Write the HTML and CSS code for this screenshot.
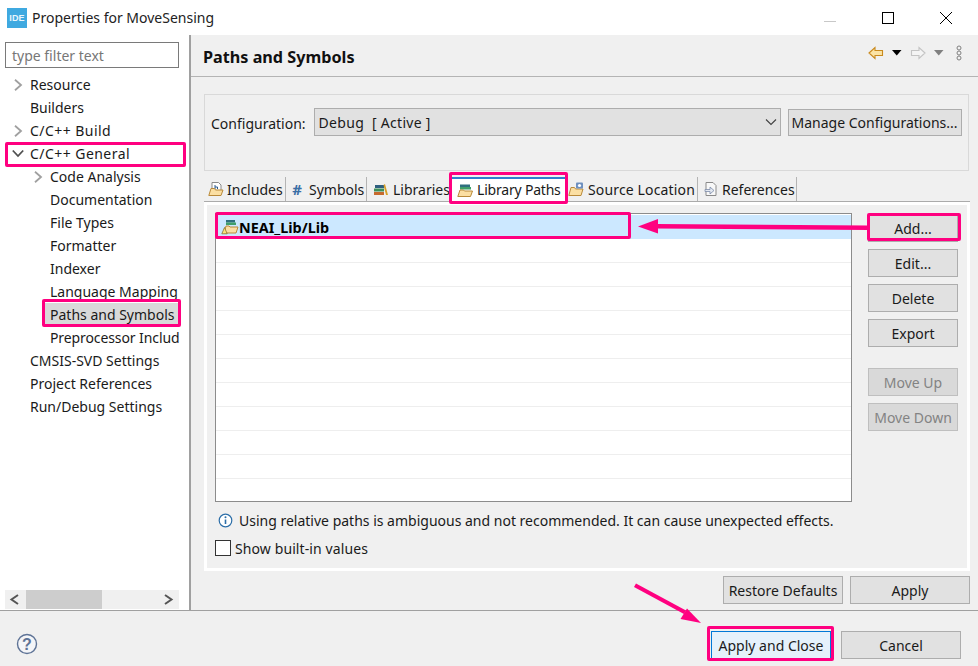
FILE: index.html
```html
<!DOCTYPE html>
<html lang="en">
<head>
<meta charset="utf-8">
<title>Properties for MoveSensing</title>
<link rel="stylesheet" href="styles.css">
</head>
<body>
<div class="window">
  <header class="titlebar">
    <span class="ide-logo">IDE</span>
    <span class="title">Properties for MoveSensing</span>
    <div class="win-controls">
      <svg width="58" height="24" viewBox="0 0 58 24"><path d="M23 15.500h12" stroke="#c8c8c8"/></svg>
      <svg width="58" height="24" viewBox="0 0 58 24"><rect x="23.500" y="6.500" width="11" height="11" fill="none" stroke="#000"/></svg>
      <svg width="58" height="24" viewBox="0 0 58 24"><path d="M23 6l12 12M35 6L23 18" stroke="#000" fill="none"/></svg>
    </div>
  </header>
  <div class="main">
    <aside class="sidebar">
      <div class="filter">type filter text</div>
      <ul class="tree">
        <li class="row"><svg class="chev" viewBox="0 0 10 12"><path d="M2 .8l6 5.200-6 5.200" fill="none" stroke="#a0a0a0" stroke-width="1.800"/></svg>Resource</li>
        <li class="row"><span class="chev"></span>Builders</li>
        <li class="row cpp"><svg class="chev" viewBox="0 0 10 12"><path d="M2 .8l6 5.200-6 5.200" fill="none" stroke="#a0a0a0" stroke-width="1.800"/></svg>C/C++ Build</li>
        <li class="row cpp"><svg class="chev-open" viewBox="0 0 12 10"><path d="M.8 1.500l5.200 5.500 5.200-5.500" fill="none" stroke="#505050" stroke-width="1.800"/></svg>C/C++ General</li>
        <li class="row sub"><svg class="chev" viewBox="0 0 10 12"><path d="M2 .8l6 5.200-6 5.200" fill="none" stroke="#a0a0a0" stroke-width="1.800"/></svg>Code Analysis</li>
        <li class="row sub"><span class="chev"></span>Documentation</li>
        <li class="row sub"><span class="chev"></span>File Types</li>
        <li class="row sub"><span class="chev"></span>Formatter</li>
        <li class="row sub"><span class="chev"></span>Indexer</li>
        <li class="row sub"><span class="chev"></span>Language Mapping</li>
        <li class="row selected">Paths and Symbols</li>
        <li class="row sub tight"><span class="chev"></span>Preprocessor Includ</li>
        <li class="row"><span class="chev"></span>CMSIS-SVD Settings</li>
        <li class="row"><span class="chev"></span>Project References</li>
        <li class="row"><span class="chev"></span>Run/Debug Settings</li>
      </ul>
      <div class="hscroll">
        <svg width="21" height="19" viewBox="0 0 21 19"><path d="M13 5L6.500 9.500 13 14" fill="none" stroke="#555" stroke-width="2"/></svg>
        <span class="thumb"></span>
        <svg class="right-arrow" width="21" height="19" viewBox="0 0 21 19"><path d="M7 5l6.500 4.500L7 14" fill="none" stroke="#555" stroke-width="2"/></svg>
      </div>
    </aside>
    <section class="content">
      <div class="page-head">
        <h1>Paths and Symbols</h1>
        <div class="nav-icons">
          <svg width="16" height="14" viewBox="0 0 16 14"><path d="M1 7l6-5.500V4.500h7.500v5H7v3z" fill="#fbe3a4" stroke="#c98a1e" stroke-width="1.100"/></svg>
          <svg class="g1" width="10" height="6" viewBox="0 0 10 6"><path d="M0 0h9.500L4.750 5.500z" fill="#000"/></svg>
          <svg class="g2" width="16" height="14" viewBox="0 0 16 14"><path d="M15 7L9 1.500V4.500H1.500v5H9v3z" fill="#f4f4f4" stroke="#c4c4c4" stroke-width="1.100"/></svg>
          <svg class="g3" width="10" height="6" viewBox="0 0 10 6"><path d="M0 0h9.500L4.750 5.500z" fill="#808080"/></svg>
          <svg class="g4" width="6" height="16" viewBox="0 0 6 16"><g fill="none" stroke="#808080"><circle cx="3" cy="3" r="2"/><circle cx="3" cy="8" r="2"/><circle cx="3" cy="13" r="2"/></g></svg>
        </div>
      </div>
      <div class="config">
        <label class="config-label">Configuration:</label>
        <div class="select"><span class="select-text">Debug&nbsp; [ Active ]</span>
          <svg width="12" height="8" viewBox="0 0 12 8"><path d="M1 1.500l5 5 5-5" fill="none" stroke="#404040" stroke-width="1.100"/></svg>
        </div>
        <button class="btn manage">Manage Configurations...</button>
      </div>
      <nav class="tabs">
        <div class="tab t1">
          <svg width="16" height="16" viewBox="0 0 16 16"><path d="M4 7V1.500h6.500L13 4v5" fill="#fff" stroke="#8a8a8a"/><path d="M7 4v4M7 6h2.500v2" fill="none" stroke="#2c5a8c"/><path d="M.8 14.500L3 7.500h3.500l1 1.500h7.500l-2 5.500z" fill="#fbdfa3" stroke="#b98a3a"/></svg>Includes</div>
        <div class="tab t2"><span class="hash">#</span>Symbols</div>
        <div class="tab t3">
          <svg width="16" height="16" viewBox="0 0 16 16"><rect x="1" y="11" width="10" height="3" fill="#c66a2e"/><rect x="1" y="7.500" width="10" height="3" fill="#3f8f5a"/><rect x="2" y="4" width="9" height="3" fill="#2f5f7f"/><path d="M12 3l3 11h-2l-2.500-10z" fill="#d7a02a"/></svg>Libraries</div>
        <div class="tab active t4">
          <svg width="17" height="16" viewBox="0 0 17 16"><rect x="3" y="2.500" width="10" height="2.500" fill="#2f6f7f"/><rect x="3" y="5" width="11" height="2.500" fill="#3f9f6a"/><path d="M.8 14.500L3 8h3.500l1 1h8l-2 5.500z" fill="#fbdfa3" stroke="#b98a3a"/></svg>Library Paths</div>
        <div class="tab t5">
          <svg width="17" height="16" viewBox="0 0 17 16"><path d="M.8 14.500L3 6.500h3.500l1 1.500h7.500l-2 6.500z" fill="#fbdfa3" stroke="#b98a3a"/><rect x="8" y="1.500" width="7" height="6" rx="1" fill="#6d8fbf"/><circle cx="11.500" cy="4.500" r="1.600" fill="#fff"/></svg>Source Location</div>
        <div class="tab t6">
          <svg width="14" height="16" viewBox="0 0 14 16"><path d="M2 1.500h7l3 3v10H2z" fill="#f8f8f8" stroke="#8a8a8a"/><path d="M1 8.500h5V6l4 3.500L6 13v-2.500H1z" fill="#e3e8f0" stroke="#7c8ca8" stroke-width=".8"/></svg>References</div>
      </nav>
      <div class="panel">
        <div class="panel-top">
          <div class="table">
            <div class="tr first">
              <svg width="18" height="16" viewBox="0 0 18 16"><rect x="5" y="1" width="9" height="2.500" fill="#2f6f7f"/><rect x="5" y="3.500" width="10" height="2.500" fill="#3f9f6a"/><path d="M3 14l2-7h3l1 1h8l-2 6z" fill="#fbdfa3" stroke="#b98a3a"/><path d="M3.500 8.500L.8 14.800h5.400z" fill="#fce37a" stroke="#7a6420" stroke-width=".7"/></svg><b>NEAI_Lib/Lib</b>
            </div>
            <div class="tr"></div><div class="tr"></div><div class="tr"></div><div class="tr"></div><div class="tr"></div>
            <div class="tr"></div><div class="tr"></div><div class="tr"></div><div class="tr"></div><div class="tr"></div><div class="tr last"></div>
          </div>
          <div class="side-btns">
            <button class="btn add">Add...</button>
            <button class="btn">Edit...</button>
            <button class="btn">Delete</button>
            <button class="btn">Export</button>
            <button class="btn off spaced">Move Up</button>
            <button class="btn off">Move Down</button>
          </div>
        </div>
        <div class="info">
          <svg width="15" height="15" viewBox="0 0 15 15"><circle cx="7.500" cy="7.500" r="6.300" fill="#fff" stroke="#2c6ea8" stroke-width="1.200"/><path d="M7.500 6.500v4.500" stroke="#2c6ea8" stroke-width="1.600"/><circle cx="7.500" cy="4.300" r="1" fill="#2c6ea8"/></svg>
          Using relative paths is ambiguous and not recommended. It can cause unexpected effects.
        </div>
        <div class="check"><span class="box"></span>Show built-in values</div>
      </div>
      <div class="content-btns">
        <button class="btn wide">Restore Defaults</button>
        <button class="btn wide">Apply</button>
      </div>
    </section>
  </div>
  <footer class="footer">
    <svg class="help" width="22" height="22" viewBox="0 0 22 22"><circle cx="11" cy="11" r="9.500" fill="#f4f5f8" stroke="#5e7396" stroke-width="1.400"/><text x="11" y="16.800" text-anchor="middle" class="help-q">?</text></svg>
    <div class="footer-btns">
      <button class="btn wide default">Apply and Close</button>
      <button class="btn wide">Cancel</button>
    </div>
  </footer>

  <div class="mark m-general"></div>
  <div class="mark m-paths"></div>
  <div class="mark m-tab"></div>
  <div class="mark m-row"></div>
  <div class="mark m-add"></div>
  <div class="mark m-apply"></div>
  <svg class="arrows" width="978" height="666" viewBox="0 0 978 666">
    <g fill="#ff0080" stroke="none">
      <path d="M656 224L868 225.500v4.500L656 228.500z"/>
      <path d="M638 226.500l20-7.500v14.500z"/>
      <path d="M636 583.500l-2 3.500 50 27 2-3.500z"/>
      <path d="M701 623l-20.500-4 6.500-10.500z"/>
    </g>
  </svg>
</div>
</body>
</html>
```
FILE: styles.css
```css
* { box-sizing: border-box; }
html, body { margin: 0; padding: 0; }
body {
  width: 978px;
  height: 666px;
  overflow: hidden;
  background: #f0f0f0;
  font-family: "Noto Sans", "Open Sans", sans-serif;
  font-size: 14px;
  color: #1a1a1a;
}
.window { position: relative; width: 978px; height: 666px; display: flex; flex-direction: column; }

.titlebar { height: 35px; background: #fff; display: flex; align-items: center; padding-left: 7px; flex: none; }
.ide-logo {
  width: 20px; height: 20px; margin-right: 5px; background: #3fa9e0; color: #e8f6fd;
  font: bold 9px/20px "Liberation Sans", sans-serif; text-align: center; letter-spacing: .2px;
}
.title { font-size: 14px; color: #222; }
.win-controls { margin-left: auto; display: flex; align-items: center; margin-right: 3px; }

.main { flex: none; height: 575px; display: flex; }
.sidebar {
  width: 191px; flex: none; background: #fff; border-right: 2px solid #a0a0a0;
  padding: 7px 10px 1px 5px; display: flex; flex-direction: column; overflow: hidden;
}
.filter {
  height: 26px; width: 174px; border: 1px solid #7a7a7a; padding-left: 6px;
  line-height: 25px; color: #777; flex: none;
}
.tree { list-style: none; margin: 5px 0 0; padding: 0; flex: 1; width: 176px; white-space: nowrap; }
.row { height: 23px; line-height: 23px; display: flex; align-items: center; }
.row.sub { padding-left: 20px; }
.row.cpp { letter-spacing: .45px; }
.row.tight { letter-spacing: -.1px; }
.row.selected { background: #d9d9d9; margin-left: 40px; width: 134px; padding-left: 5px; }
.chev { width: 10px; height: 12px; margin: 0 7px 0 8px; flex: none; }
.chev-open { width: 12px; height: 10px; margin: 0 6px 0 7px; flex: none; }
.hscroll { height: 19px; width: 174px; background: #f0f0f0; display: flex; align-items: center; flex: none; }
.thumb { width: 76px; height: 19px; background: #cdcdcd; }
.right-arrow { margin-left: auto; }

.content { flex: 1; min-width: 0; display: flex; flex-direction: column; padding-left: 13px; }
.page-head {
  height: 42px; margin: 0 0 17px -13px; padding: 2px 16px 0 12px; border-bottom: 1px solid #b4b4b4;
  display: flex; align-items: center; justify-content: space-between; flex: none;
}
h1 { font-size: 16.200px; font-weight: 700; margin: 0; color: #111; }
.nav-icons { display: flex; align-items: center; margin-bottom: 7px; }
.nav-icons .g1 { margin-left: 8px; }
.nav-icons .g2 { margin-left: 8px; }
.nav-icons .g3 { margin-left: 8px; }
.nav-icons .g4 { margin-left: 12px; }

.config {
  height: 77px; width: 765px; border: 1px solid #d9d9d9; display: flex; align-items: flex-start;
  padding: 13px 6px 0 6px; flex: none;
}
.config-label { line-height: 32px; margin-right: 8px; }
.select {
  width: 467px; height: 28px; background: #e1e1e1; border: 1px solid #adadad; display: flex;
  align-items: center; justify-content: space-between; padding: 0 3px 0 4px; margin-right: 7px; flex: none;
}
.select-text { letter-spacing: .3px; }
.btn {
  font: inherit; color: #1a1a1a; background: #e1e1e1; border: 1px solid #adadad; height: 28px;
  padding: 0; display: block;
}
.manage { width: 174px; height: 27px; margin-top: 1px; flex: none; }

.tabs { height: 25px; margin-top: 6px; width: 766px; display: flex; align-items: stretch; border-bottom: 1px solid #ababab; flex: none; }
.tab { display: flex; align-items: center; gap: 3px; padding: 0; border-right: 1px solid #b4b4b4; flex: none; white-space: nowrap; }
.tab svg { flex: none; }
.t1 { width: 82px; padding-left: 4px; }
.t2 { width: 81px; padding-left: 3px; }
.hash { color: #3b6ea5; font-weight: 700; font-size: 15px; width: 16px; text-align: center; margin-right: 1px; }
.t3 { width: 84px; padding-left: 6px; gap: 4px; border-right: 0; }
.t4 { width: 115px; background: #fff; border-top: 2px solid #2f7fd0; border-right: 0; margin-bottom: -1px; padding: 0 0 2px 6px; letter-spacing: -.2px; }
.t5 { width: 131px; padding-left: 1px; margin-left: 1px; letter-spacing: .15px; }
.t6 { width: 99px; padding-left: 6px; gap: 4px; }

.panel {
  width: 766px; height: 369px; background: #f0f0f0; border: 3px solid #fff;
  padding: 8px 8px 0 8px; flex: none;
}
.panel-top { display: flex; }
.table { width: 637px; height: 289px; background: #fff; border: 1px solid #8c8c8c; flex: none; overflow: hidden; padding-top: 1px; }
.tr { height: 24px; border-bottom: 1px solid #eeeeee; display: flex; align-items: center; }
.tr.first { background: #cce8ff; border-bottom: 0; padding-left: 5px; }
.tr.first b { color: #000; font-size: 14.400px; }
.tr.last { border-bottom: 0; }
.side-btns { margin-left: 16px; width: 90px; display: flex; flex-direction: column; gap: 7px; flex: none; }
.side-btns .btn { width: 90px; }
.side-btns .add { margin-top: 1px; }
.btn.off { background: #d9d9d9; color: #838383; border-color: #bfbfbf; }
.btn.spaced { margin-top: 14px; }
.info { display: flex; align-items: center; gap: 6px; margin-top: 8px; padding-left: 3px; height: 20px; }
.check { display: flex; align-items: center; gap: 4px; margin-top: 8px; height: 20px; letter-spacing: .1px; }
.box { width: 16px; height: 16px; border: 1px solid #333; background: #fff; flex: none; }

.content-btns { display: flex; gap: 7px; margin: 5px 0 0 519px; flex: none; }
.wide { width: 120px; }

.footer { flex: 1; border-top: 1px solid #a0a0a0; display: flex; align-items: flex-start; padding: 0 17px 0 16px; }
.help { margin-top: 22px; }
.help-q { font: bold 16px "Liberation Sans", sans-serif; fill: #5e7396; }
.footer-btns { margin-left: auto; display: flex; gap: 10px; margin-top: 20px; }
.btn.default { background: #e5f1fb; border: 1px solid #0078d7; }

.mark { position: absolute; border: 3px solid #ff0080; border-radius: 2px; pointer-events: none; }
.m-general { left: 5px; top: 142px; width: 181px; height: 25px; }
.m-paths { left: 42px; top: 299px; width: 139px; height: 28px; }
.m-tab { left: 449px; top: 172px; width: 119px; height: 32px; }
.m-row { left: 215px; top: 212px; width: 416px; height: 27px; }
.m-add { left: 867px; top: 213px; width: 94px; height: 28px; }
.m-apply { left: 707px; top: 626px; width: 127px; height: 35px; }
.arrows { position: absolute; left: 0; top: 0; pointer-events: none; }
```
